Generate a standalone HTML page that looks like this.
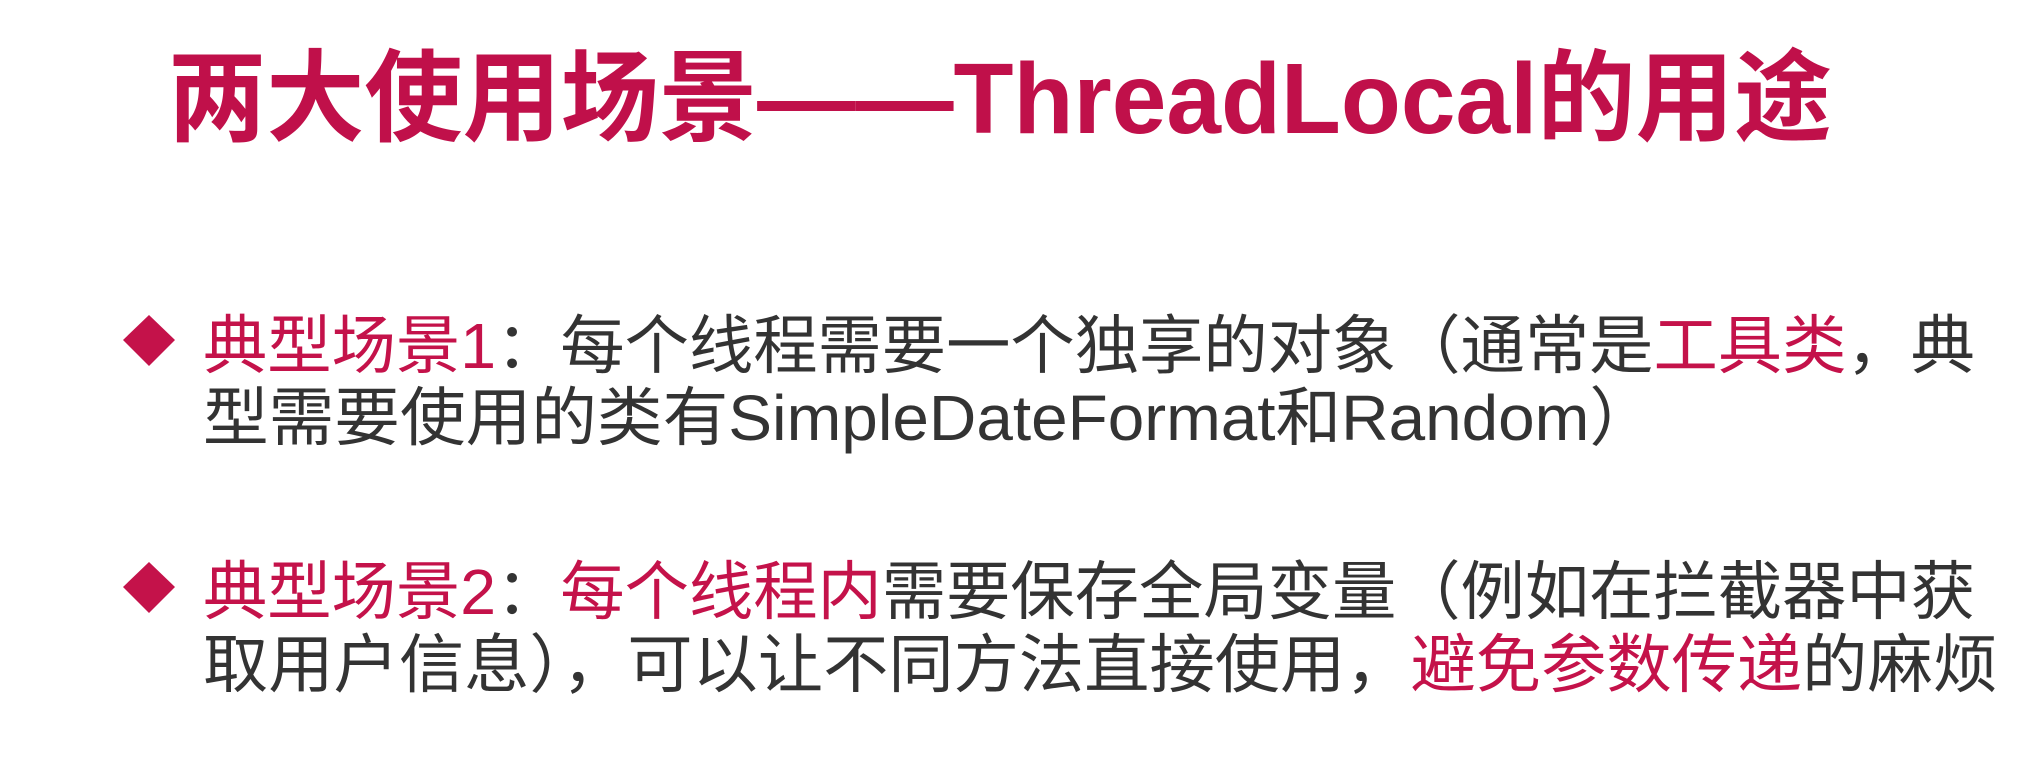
<!DOCTYPE html>
<html><head><meta charset="utf-8"><style>
html,body{margin:0;padding:0;background:#fff;width:2030px;height:772px;overflow:hidden}
svg{display:block}
text{font-family:"Liberation Sans","Noto Sans CJK SC",sans-serif}
</style></head><body>
<svg width="2030" height="772" viewBox="0 0 2030 772">
<text x="168" y="133" font-size="100" font-weight="bold" fill="#c0104a" textLength="1664" lengthAdjust="spacingAndGlyphs">两大使用场景——ThreadLocal的用途</text>
<polygon points="149,315 175,340 149,366 123,340" fill="#c4124a"/>
<polygon points="149,562 175,587 149,613 123,587" fill="#c4124a"/>
<g font-size="64" fill="#333">
<text x="203" y="368" textLength="1772" lengthAdjust="spacingAndGlyphs"><tspan fill="#c4124a">典型场景1</tspan>：每个线程需要一个独享的对象（通常是<tspan fill="#c4124a">工具类</tspan>，典</text>
<text x="203" y="440" textLength="1452" lengthAdjust="spacingAndGlyphs">型需要使用的类有SimpleDateFormat和Random）</text>
<text x="203" y="614" textLength="1772" lengthAdjust="spacingAndGlyphs"><tspan fill="#c4124a">典型场景2</tspan>：<tspan fill="#c4124a">每个线程内</tspan>需要保存全局变量（例如在拦截器中获</text>
<text x="203" y="687" textLength="1795" lengthAdjust="spacingAndGlyphs">取用户信息），可以让不同方法直接使用，<tspan fill="#c4124a">避免参数传递</tspan>的麻烦</text>
</g>
</svg>
</body></html>
